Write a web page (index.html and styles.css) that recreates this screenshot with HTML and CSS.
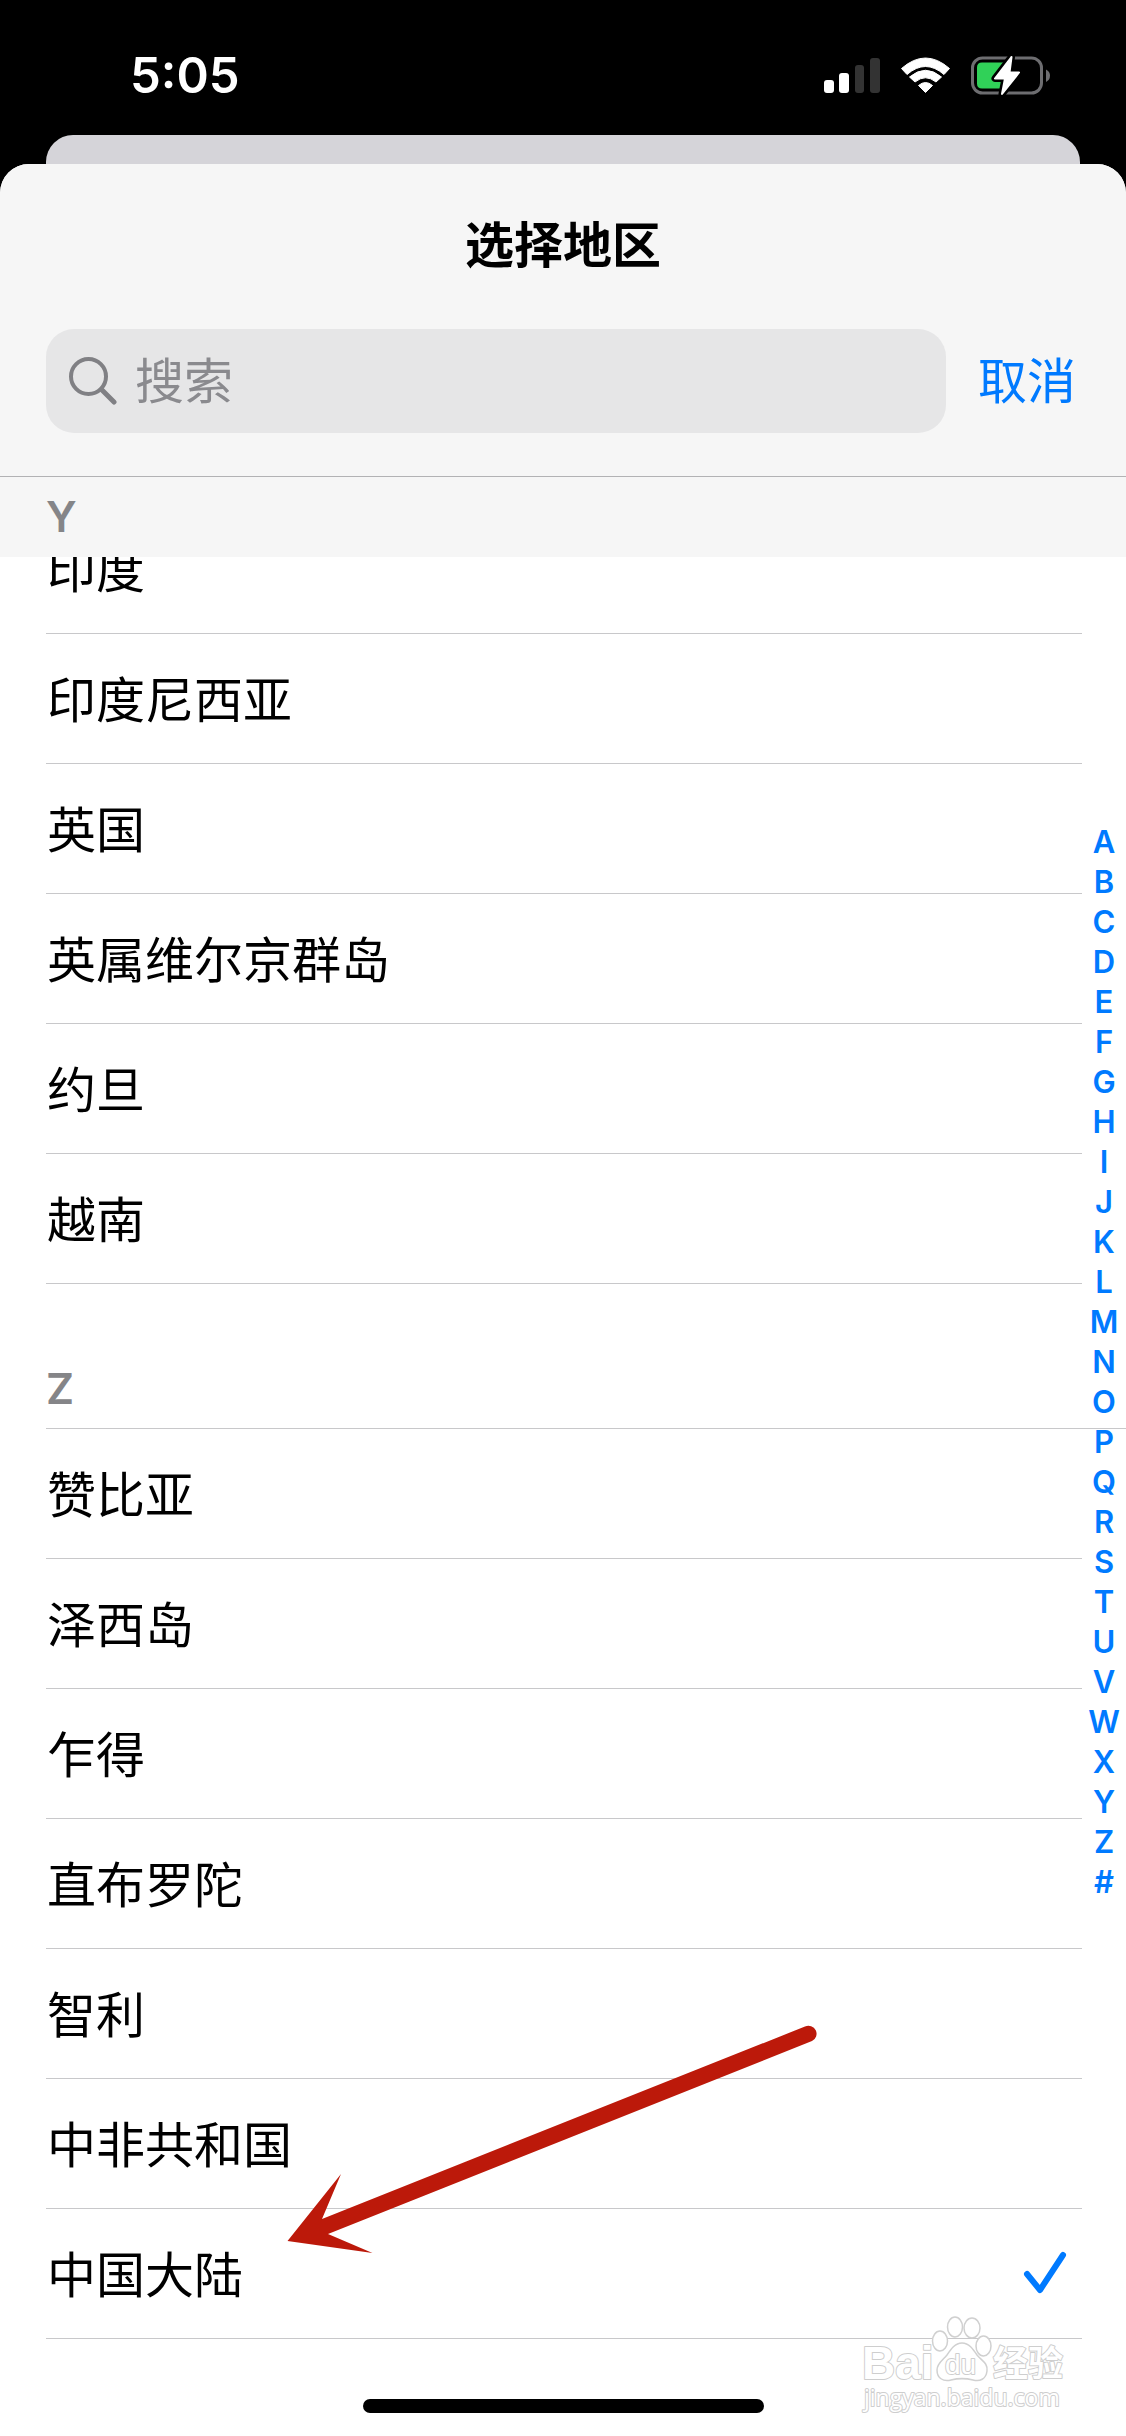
FILE: index.html
```html
<!DOCTYPE html>
<html lang="zh-CN">
<head>
<meta charset="UTF-8">
<meta name="viewport" content="width=device-width, initial-scale=1.0">
<title>选择地区</title>
<link rel="stylesheet" href="styles.css">
</head>
<body>

<div class="status-bar">
  <span class="time">5:05</span>
  <svg class="status-icons" width="230" height="44" viewBox="822 53 230 44">
    <!-- signal -->
    <rect x="824" y="79" width="10" height="13" rx="3" fill="#fff"/>
    <rect x="839" y="72" width="10" height="20" rx="3" fill="#fff"/>
    <rect x="855" y="64" width="9" height="28" rx="3" fill="#333"/>
    <rect x="870" y="57" width="10" height="35" rx="3" fill="#333"/>
    <!-- wifi -->
    <g fill="#fff" stroke="#fff" stroke-width="1" stroke-linejoin="round">
      <path d="M901.500 67.500Q925.500 46.500 949.500 67.500L944 73.500Q925.500 57.500 907 73.500Z"/>
      <path d="M909.500 76Q925.500 62.500 941.500 76L936 81Q925.500 72.500 915 81Z"/>
      <path d="M918.500 84.500Q925.500 78.500 932.500 84.500L925.500 91.500Z"/>
    </g>
    <!-- battery -->
    <rect x="972.500" y="57" width="69" height="35" rx="10" fill="none" stroke="#6d6d70" stroke-width="3"/>
    <path d="M1046 68.500Q1050 70.500 1050 74.500Q1050 79 1046 81Z" fill="#6d6d70"/>
    <path d="M982 61.500H1015V87.500H982Q977 87.500 977 82.500V66.500Q977 61.500 982 61.500Z" fill="#30d158"/>
    <path d="M1011.500 56L995 77.500H1005L1002 93L1019 71.500H1009.500Z" fill="#fff" stroke="#000" stroke-width="7" stroke-linejoin="round"/>
    <path d="M1007 70L1004 88H1022V60H1011Z" fill="#000"/>
    <path d="M1011.500 56L995 77.500H1005L1002 93L1019 71.500H1009.500Z" fill="#fff" stroke="#fff" stroke-width="2" stroke-linejoin="round"/>
  </svg>
</div>

<div class="back-sheet"></div>

<div class="sheet">
  <header class="sheet-header">
    <h1>选择地区</h1>
    <div class="search-row">
      <label class="search">
        <svg width="48" height="48" viewBox="0 0 48 48" fill="none" stroke="#808084" stroke-width="4" stroke-linecap="round">
          <circle cx="19.500" cy="19.500" r="17.500"/>
          <path d="M32.500 32.500L45 45" stroke-width="5"/>
        </svg>
        <input type="text" placeholder="搜索" aria-label="搜索">
      </label>
      <button class="cancel">取消</button>
    </div>
  </header>

  <main class="list">
    <section id="Y">
      <h2 class="letter pinned">Y</h2>
      <ul>
        <li class="scrolled"><button>印度</button></li>
        <li><button>印度尼西亚</button></li>
        <li><button>英国</button></li>
        <li><button>英属维尔京群岛</button></li>
        <li><button>约旦</button></li>
        <li><button>越南</button></li>
      </ul>
    </section>

    <section id="Z">
      <h2 class="letter">Z</h2>
      <ul>
        <li><button>赞比亚</button></li>
        <li><button>泽西岛</button></li>
        <li><button>乍得</button></li>
        <li><button>直布罗陀</button></li>
        <li><button>智利</button></li>
        <li><button>中非共和国</button></li>
        <li class="selected">
          <button>中国大陆
            <svg width="46" height="46" viewBox="0 0 46 46" fill="none" stroke="#007aff" stroke-width="6" stroke-linecap="round" stroke-linejoin="round">
              <path d="M5 26L18 42L41 7"/>
            </svg>
          </button>
        </li>
      </ul>
    </section>

    <nav class="index">
      <a href="#A">A</a>
      <a href="#B">B</a>
      <a href="#C">C</a>
      <a href="#D">D</a>
      <a href="#E">E</a>
      <a href="#F">F</a>
      <a href="#G">G</a>
      <a href="#H">H</a>
      <a href="#I">I</a>
      <a href="#J">J</a>
      <a href="#K">K</a>
      <a href="#L">L</a>
      <a href="#M">M</a>
      <a href="#N">N</a>
      <a href="#O">O</a>
      <a href="#P">P</a>
      <a href="#Q">Q</a>
      <a href="#R">R</a>
      <a href="#S">S</a>
      <a href="#T">T</a>
      <a href="#U">U</a>
      <a href="#V">V</a>
      <a href="#W">W</a>
      <a href="#X">X</a>
      <a href="#Y">Y</a>
      <a href="#Z">Z</a>
      <a href="#other">#</a>
    </nav>

    <!-- arrow pointing at the selected region -->
    <svg class="arrow" width="532" height="232" viewBox="286 2024 532 232">
      <path d="M287.500 2241L341 2174L322 2219L805 2026.500A8 8 0 0 1 812 2041L328 2234L372.500 2253Z" fill="#bc190a"/>
    </svg>
  </main>

  <div class="home-indicator"></div>

  <svg class="watermark" width="212" height="104" viewBox="860 2312 212 104">
    <g fill="#fff" stroke="#d0d0d0" stroke-width="1.500">
      <ellipse cx="940" cy="2340" rx="7.500" ry="10"/>
      <ellipse cx="955" cy="2326" rx="7.500" ry="10"/>
      <ellipse cx="972" cy="2327" rx="8" ry="10"/>
      <ellipse cx="983.500" cy="2345" rx="7.500" ry="10"/>
      <path d="M962 2342C969 2342 973 2348 977 2354C982 2360 988 2362 987 2370C986 2378 980 2381 973 2379C965 2377 959 2377 951 2379C943 2381 937 2377 937 2369C937 2362 943 2359 947 2354C951 2348 955 2342 962 2342Z"/>
    </g>
    <g class="watermark-text">
      <text x="862" y="2378" class="brand">Bai</text>
      <text x="945" y="2373" class="du">du</text>
      <text x="993" y="2375" class="cjk">经验</text>
      <text x="864" y="2405" class="url">jingyan.baidu.com</text>
    </g>
  </svg>
</div>

</body>
</html>
```

FILE: styles.css
```css
* {
  box-sizing: border-box;
}
body {
  margin: 0;
  background: #000;
  color: #000;
  font-family: Inter, "Noto Sans CJK SC", sans-serif;
  font-size: 49px;
}
button {
  padding: 0;
  border: none;
  background: none;
  color: inherit;
  font: inherit;
  text-align: left;
  cursor: pointer;
}
ul {
  margin: 0;
  padding: 0;
  list-style: none;
}

/* Status bar */
.status-bar {
  display: flex;
  justify-content: space-between;
  align-items: center;
  height: 135px;
  padding: 16px 74px 0 130px;
  color: #fff;
}
.time {
  font-size: 49px;
  font-weight: 600;
}

/* Sheets */
.back-sheet {
  height: 29px;
  margin: 0 46px;
  border-radius: 27px 27px 0 0;
  background: #d5d4d9;
}
.sheet {
  position: relative;
  padding-bottom: 24px;
  border-radius: 29px 29px 0 0;
  background: #fff;
}
.sheet-header {
  padding: 47px 46px 43px;
  border-bottom: 1px solid #b2b2b4;
  border-radius: 29px 29px 0 0;
  background: #f6f6f6;
}
h1 {
  margin: 0;
  font-size: 49px;
  font-weight: 600;
  line-height: 70px;
  text-align: center;
}
.search-row {
  display: flex;
  align-items: center;
  gap: 32px;
  margin-top: 48px;
}
.search {
  display: flex;
  flex: 1;
  align-items: center;
  gap: 18px;
  height: 104px;
  padding: 0 23px;
  border-radius: 28px;
  background: #e6e6e7;
}
.search input {
  flex: 1;
  min-width: 0;
  padding: 0;
  border: none;
  outline: none;
  background: none;
  font: inherit;
}
.search input::placeholder {
  color: #8a8a8e;
  opacity: 1;
}
.cancel {
  padding: 0 4px 8px 0;
  color: #007aff;
}

/* Region list */
.list {
  position: relative;
}
.letter {
  margin: 0;
  height: 144px;
  padding: 65px 46px 0;
  color: #858588;
  font-size: 43px;
  font-weight: 600;
  line-height: 78px;
}
.letter.pinned {
  position: relative;
  z-index: 1;
  height: 80px;
  padding-top: 0;
  background: #f6f6f6;
}
section + section ul {
  border-top: 1px solid #c8c8ca;
  margin-left: 46px;
}
li {
  height: 130px;
  margin: 0 44px 0 46px;
  border-bottom: 1px solid #c8c8ca;
}
section + section li {
  margin-left: 0;
}
li.scrolled {
  margin-top: -53px;
}
li button {
  display: flex;
  justify-content: space-between;
  align-items: center;
  width: 100%;
  height: 100%;
  padding: 0 14px 5px 1px;
}

/* A-Z index */
.index {
  position: absolute;
  top: 345px;
  right: 0;
  display: flex;
  flex-direction: column;
  width: 44px;
}
.index a {
  color: #007aff;
  font-size: 31px;
  font-weight: 600;
  line-height: 40px;
  text-align: center;
  text-decoration: none;
}

.arrow {
  position: absolute;
  bottom: 83px;
  left: 286px;
}

.home-indicator {
  width: 401px;
  height: 14px;
  margin: 60px auto 0;
  border-radius: 7px;
  background: #000;
}

/* Watermark */
.watermark {
  position: absolute;
  right: 54px;
  bottom: 20px;
}
.watermark-text {
  fill: #fff;
  stroke: #cecece;
  stroke-width: 2px;
  stroke-linejoin: round;
  paint-order: stroke;
  font-family: "Liberation Sans", sans-serif;
}
.brand {
  font-size: 46px;
  font-weight: 700;
}
.du {
  font-size: 28px;
}
.cjk {
  font-family: "Noto Sans CJK SC", sans-serif;
  font-size: 35px;
  font-weight: 700;
}
.url {
  font-family: "Open Sans", sans-serif;
  font-size: 23px;
}
```
